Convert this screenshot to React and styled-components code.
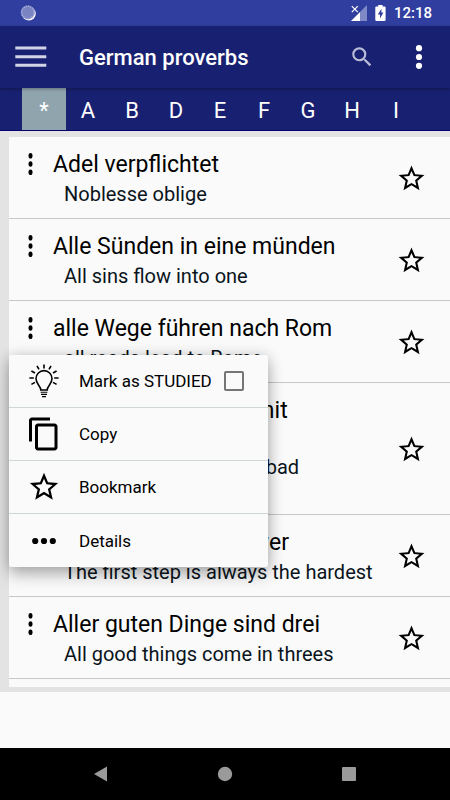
import styled, { createGlobalStyle } from "styled-components";

const GlobalStyle = createGlobalStyle`
    *, *::before, *::after {
        box-sizing: border-box;
    }

    body {
        margin: 0;
        background: #fafafa;
        color: #000;
        font-family: Roboto, sans-serif;
    }

    button {
        margin: 0;
        padding: 0;
        border: 0;
        background: none;
        color: inherit;
        font: inherit;
        cursor: pointer;
    }

    svg {
        display: block;
    }
`;

const Page = styled.div`
    display: flex;
    flex-direction: column;
    min-height: 100vh;
`;

const StatusBar = styled.div`
    display: flex;
    align-items: center;
    justify-content: space-between;
    height: 26px;
    padding: 0 18px 0 20px;
    background: #303f9f;
    color: #fff;
    font-size: 15px;
    font-weight: 500;
`;

const StatusGroup = styled.div`
    display: flex;
    align-items: center;
    gap: 8px;
`;

const AppBar = styled.header`
    position: relative;
    z-index: 1;
    display: flex;
    align-items: center;
    height: 62px;
    padding: 0 16px 0 15px;
    background: #182071;
    color: #fff;
    box-shadow: 0 1px 3px rgba(0, 0, 0, 0.35);
`;

const AppTitle = styled.h1`
    flex: 1;
    margin: 2px 0 0 32px;
    font-size: 22px;
    font-weight: 500;
    line-height: 28px;
`;

const AppActions = styled.div`
    display: flex;
    align-items: center;
    gap: 29px;
`;

const Tabs = styled.nav`
    display: flex;
    height: 43px;
    padding-left: 22px;
    overflow: hidden;
    background: #182071;
    border-bottom: 1px solid #05006b;
`;

const Tab = styled.button`
    flex: 0 0 44px;
    padding-top: 2px;
    background: ${({ $active }) => ($active ? "#90a4ae" : "transparent")};
    color: #fff;
    font-size: 22px;
`;

const ListFrame = styled.main`
    padding: 6px 0 5px 9px;
    background: #e3e3e3;
`;

const List = styled.ul`
    margin: 0;
    padding: 0 0 8px;
    background: #fafafa;
    list-style: none;
`;

const Row = styled.li`
    position: relative;
    display: flex;
    padding: 14px 23px 12px 19px;
    border-bottom: 1px solid #c8c8c8;
`;

const RowMenuButton = styled.button`
    align-self: flex-start;
    margin-top: 1px;
`;

const RowText = styled.div`
    flex: 1;
    margin-left: 20px;
    white-space: pre-line;
`;

const Proverb = styled.h2`
    margin: 0;
    font-size: 23px;
    font-weight: 400;
    line-height: 27px;
`;

const Translation = styled.p`
    margin: 5px 0 0 11px;
    color: #0a141c;
    font-size: 20px;
    line-height: 23px;
`;

const Menu = styled.div`
    position: absolute;
    z-index: 2;
    top: 54px;
    left: 0;
    width: 259px;
    border-radius: 2px;
    background: #fafafa;
    box-shadow: 0 8px 16px rgba(0, 0, 0, 0.26), 0 0 14px rgba(0, 0, 0, 0.16);
`;

const MenuItem = styled.button`
    display: flex;
    align-items: center;
    width: 100%;
    height: 53px;
    padding-left: 17px;
    font-size: 17px;
    text-align: left;
    cursor: pointer;

    &:not(:last-child) {
        border-bottom: 1px solid #d0d8d3;
    }
`;

const MenuIcon = styled.span`
    display: flex;
    justify-content: center;
    width: 36px;
    margin-right: 17px;
`;

const Checkbox = styled.input`
    appearance: none;
    width: 20px;
    height: 20px;
    margin: 0 0 0 12px;
    border: 2px solid #757575;
    border-radius: 2px;

    &:checked {
        background: #303f9f;
    }
`;

const NavBar = styled.footer`
    display: flex;
    align-items: center;
    justify-content: center;
    gap: 106px;
    height: 52px;
    margin-top: auto;
    background: #000;
    color: #9a9a9a;
`;

const SyncIcon = () => (
    <svg width="16" height="16" viewBox="0 0 16 16">
        <circle cx="8.8" cy="8.6" r="7" fill="#fff" />
        <circle cx="7.8" cy="7.4" r="7" fill="#7a84c2" />
        <circle cx="7.8" cy="7.4" r="6.2" fill="none" stroke="#b4badf" strokeWidth="1.4" strokeDasharray="1 1.2" />
    </svg>
);

const SignalIcon = () => (
    <svg width="16" height="16" viewBox="0 0 16 16">
        <path d="M16 0v16H0z" fill="#7f89c6" />
        <path d="M0 0h9v16H0z" fill="#303f9f" />
        <path d="M9 7v9H0z" fill="#fff" />
        <path d="M.8 1.2l6 6M6.8 1.2l-6 6" stroke="#fff" strokeWidth="1.2" />
    </svg>
);

const BatteryIcon = () => (
    <svg width="11" height="16" viewBox="0 0 11 16">
        <path d="M3.2 0h4.4v1.6h2q1 0 1 1v12.2q0 1.2-1.2 1.2H1.4Q.3 16 .3 14.8V2.6q0-1 1-1h1.9z" fill="#fff" />
        <path d="M6.4 3.8L2.8 9.4H5v4l3.4-5.8H6.4z" fill="#303f9f" />
    </svg>
);

const HamburgerIcon = () => (
    <svg width="32" height="22" viewBox="0 0 32 22">
        <path d="M.3 2h31M.3 10.7h31M.3 19.3h31" stroke="#d1d3e6" strokeWidth="3" />
    </svg>
);

const SearchIcon = () => (
    <svg width="26" height="26" viewBox="0 0 24 24">
        <path
            fill="#b9bcd6"
            d="M15.5 14h-.79l-.28-.27A6.471 6.471 0 0 0 16 9.5 6.5 6.5 0 1 0 9.5 16c1.61 0 3.09-.59 4.23-1.57l.27.28v.79l5 4.99L20.49 19l-4.99-5zm-6 0C7.01 14 5 11.99 5 9.5S7.01 5 9.5 5 14 7.01 14 9.5 11.99 14 9.5 14z"
        />
    </svg>
);

const OverflowIcon = () => (
    <svg width="30" height="26" viewBox="0 0 30 26" fill="#fff">
        <circle cx="15" cy="4.2" r="3.1" />
        <circle cx="15" cy="13" r="3.1" />
        <circle cx="15" cy="21.8" r="3.1" />
    </svg>
);

const DotsIcon = () => (
    <svg width="5" height="24" viewBox="0 0 5 24">
        <ellipse cx="2.5" cy="3.8" rx="2" ry="2.8" />
        <ellipse cx="2.5" cy="12" rx="2" ry="2.8" />
        <ellipse cx="2.5" cy="20.2" rx="2" ry="2.8" />
    </svg>
);

const StarIcon = ({ size = 31 }) => (
    <svg width={size} height={size} viewBox="0 0 24 24">
        <path d="M22 9.24l-7.19-.62L12 2 9.19 8.63 2 9.24l5.46 4.73L5.82 21 12 17.27 18.18 21l-1.63-7.03L22 9.24zM12 15.4l-3.76 2.27 1-4.28-3.32-2.88 4.38-.38L12 6.1l1.71 4.04 4.38.38-3.32 2.88 1 4.28L12 15.4z" />
    </svg>
);

const BulbIcon = () => (
    <svg width="30" height="34" viewBox="0 0 30 34" fill="none" stroke="#000" strokeWidth="1.6">
        <path d="M11.8 26c0-4.4-4.8-5.6-4.8-11.4a8 8 0 0 1 16 0c0 5.8-4.8 7-4.8 11.4z" />
        <path d="M11.6 28.2h6.8M12 30.4h6M13 32.6h4" strokeWidth="1.1" />
        <path d="M15 .4v4M8 2l2 3.4M22 2l-2 3.4M2.4 7l3.6 2M27.600 7l-3.6 2M.4 14h4.400M29.600 14h-4.400M2.400 20.400l3.600-2M27.600 20.400l-3.600-2" />
    </svg>
);

const CopyIcon = () => (
    <svg width="36" height="36" viewBox="0 0 24 24">
        <path d="M16 1H4c-1.1 0-2 .9-2 2v14h2V3h12V1zm3 4H8c-1.1 0-2 .9-2 2v14c0 1.1.9 2 2 2h11c1.1 0 2-.9 2-2V7c0-1.1-.9-2-2-2zm0 16H8V7h11v14z" />
    </svg>
);

const MoreIcon = () => (
    <svg width="26" height="8" viewBox="0 0 26 8">
        <circle cx="4.2" cy="4" r="3.1" />
        <circle cx="13" cy="4" r="3.1" />
        <circle cx="21.8" cy="4" r="3.1" />
    </svg>
);

const letters = ["*", "A", "B", "D", "E", "F", "G", "H", "I"];

const proverbs = [
    { text: "Adel verpflichtet", translation: "Noblesse oblige" },
    { text: "Alle Sünden in eine münden", translation: "All sins flow into one" },
    { text: "alle Wege führen nach Rom", translation: "all roads lead to Rome", menuOpen: true },
    {
        text: "Alle Güter kommen mit\nBürden",
        translation: "We take the good with bad\nalong the way",
    },
    { text: "Aller Anfang ist schwer", translation: "The first step is always the hardest" },
    { text: "Aller guten Dinge sind drei", translation: "All good things come in threes" },
];

const RowMenu = () => (
    <Menu>
        <MenuItem as="label" htmlFor="studied">
            <MenuIcon><BulbIcon /></MenuIcon>
            Mark as STUDIED
            <Checkbox type="checkbox" id="studied" />
        </MenuItem>
        <MenuItem>
            <MenuIcon><CopyIcon /></MenuIcon>
            Copy
        </MenuItem>
        <MenuItem>
            <MenuIcon><StarIcon size={34} /></MenuIcon>
            Bookmark
        </MenuItem>
        <MenuItem>
            <MenuIcon><MoreIcon /></MenuIcon>
            Details
        </MenuItem>
    </Menu>
);

export default function App() {
    return (
        <Page>
            <GlobalStyle />
            <StatusBar>
                <SyncIcon />
                <StatusGroup>
                    <SignalIcon />
                    <BatteryIcon />
                    <span>12:18</span>
                </StatusGroup>
            </StatusBar>
            <AppBar>
                <button aria-label="Open navigation"><HamburgerIcon /></button>
                <AppTitle>German proverbs</AppTitle>
                <AppActions>
                    <button aria-label="Search"><SearchIcon /></button>
                    <button aria-label="More options"><OverflowIcon /></button>
                </AppActions>
            </AppBar>
            <Tabs>
                {letters.map((letter) => (
                    <Tab key={letter} $active={letter === "*"}>{letter}</Tab>
                ))}
            </Tabs>
            <ListFrame>
                <List>
                    {proverbs.map(({ text, translation, menuOpen }) => (
                        <Row key={text}>
                            <RowMenuButton aria-label="Proverb actions"><DotsIcon /></RowMenuButton>
                            <RowText>
                                <Proverb>{text}</Proverb>
                                <Translation>{translation}</Translation>
                            </RowText>
                            <button aria-label="Bookmark proverb"><StarIcon /></button>
                            {menuOpen && <RowMenu />}
                        </Row>
                    ))}
                </List>
            </ListFrame>
            <NavBar>
                <button aria-label="Back">
                    <svg width="20" height="16" viewBox="0 0 20 16" fill="currentColor"><path d="M16 .6v14.8L3 8z" /></svg>
                </button>
                <button aria-label="Home">
                    <svg width="16" height="16" viewBox="0 0 16 16" fill="currentColor"><circle cx="8" cy="8" r="7.2" /></svg>
                </button>
                <button aria-label="Recent apps">
                    <svg width="20" height="16" viewBox="0 0 20 16" fill="currentColor"><rect x="3" y="1" width="14" height="14" rx="1" /></svg>
                </button>
            </NavBar>
        </Page>
    );
}
